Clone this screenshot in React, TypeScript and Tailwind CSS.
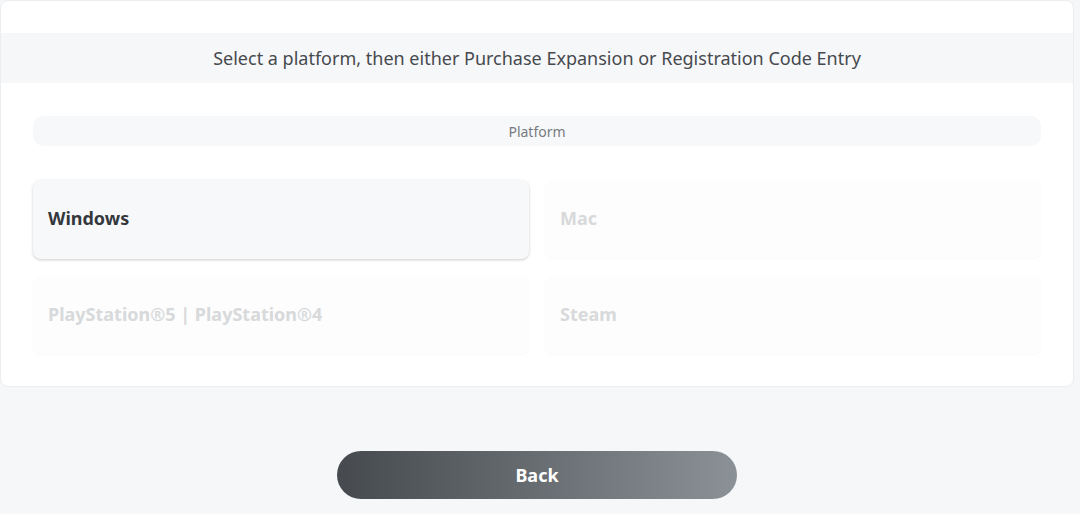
const platforms = [
  { name: "Windows", enabled: true },
  { name: "Mac", enabled: false },
  { name: "PlayStation®5 | PlayStation®4", enabled: false },
  { name: "Steam", enabled: false },
];

export default function App() {
  return (
    <div className="min-h-[514px] bg-[#f6f7f9] font-['Noto_Sans',sans-serif]">
      <div className="w-[1074px]">
        <div className="rounded-lg border border-[#ebedf0] bg-white pt-8 pb-8">
          <div className="flex h-[50px] items-center justify-center bg-[#f6f7f9] text-[18px] text-[#464a4e]">
            Select a platform, then either Purchase Expansion or Registration Code Entry
          </div>
          <div className="px-8 pt-[33px]">
            <div className="flex h-[30px] items-center justify-center rounded-[10px] bg-[#f7f8fa] text-[14px] text-[#777b80]">
              Platform
            </div>
            <div className="mt-[34px] grid grid-cols-2 gap-x-4 gap-y-[17px]">
              {platforms.map((p) => (
                <button
                  key={p.name}
                  disabled={!p.enabled}
                  className={
                    p.enabled
                      ? "flex h-[79px] items-center rounded-lg bg-[#f7f8fa] px-[15px] pb-[2px] text-left text-[18px] font-bold text-[#34383c] shadow-[0_1px_3px_rgba(0,0,0,0.2)]"
                      : "flex h-[78px] items-center rounded-lg bg-[#fdfdfd] px-[15px] pb-[2px] text-left text-[18px] font-bold text-[#d7d9db] shadow-[0_1px_2px_rgba(0,0,0,0.03)]"
                  }
                >
                  {p.name}
                </button>
              ))}
            </div>
          </div>
        </div>
        <div className="flex justify-center pt-[64px]">
          <button className="h-[48px] w-[400px] rounded-full bg-gradient-to-r from-[#464a4e] to-[#8b9297] text-[18px] font-bold text-white">
            Back
          </button>
        </div>
      </div>
    </div>
  );
}
